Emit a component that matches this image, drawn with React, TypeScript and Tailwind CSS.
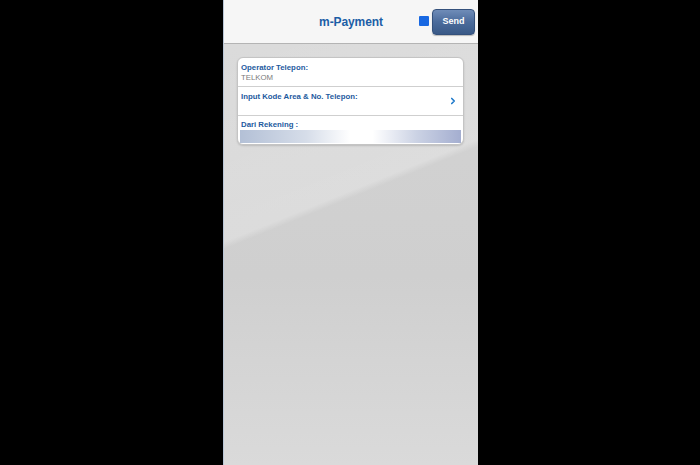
import { ChevronRight } from 'lucide-react';

const rows = [
  { label: 'Operator Telepon:', value: 'TELKOM' },
  { label: 'Input Kode Area & No. Telepon:', arrow: true },
];

export default function App() {
  return (
    <div className="w-[700px] h-[465px] bg-black flex pl-[223px] font-['Liberation_Sans',Arial,sans-serif]">
      <div className="w-[255px] h-full flex flex-col border-l border-[#b9c6d6]">
        {/* header */}
        <div className="h-[44px] shrink-0 bg-[#f6f6f6] border-b border-[#b4b4b4] flex items-center relative">
          <h1 className="flex-1 text-center text-[12px] font-bold text-[#1c5ea6] tracking-[-0.1px]">m-Payment</h1>
          <div className="absolute right-[3px] top-[9px] flex items-start gap-[3px]">
            <span className="mt-[7px] w-[10px] h-[10px] rounded-[1px] bg-[#1868e2]" />
            <button className="w-[43px] h-[26px] rounded-[4px] border border-[#34517c] bg-[linear-gradient(180deg,#6f8cb8_0%,#4b6b9b_50%,#3a5987_100%)] text-white text-[9px] font-bold shadow-[0_1px_1px_rgba(0,0,0,0.25)]">
              Send
            </button>
          </div>
        </div>

        {/* body */}
        <div className="flex-1 bg-[linear-gradient(158deg,rgba(255,255,255,0.18)_0%,rgba(255,255,255,0.26)_37.8%,rgba(255,255,255,0)_39.2%),linear-gradient(180deg,#d3d3d3_0%,#cfcfcf_55%,#dadada_100%)] pt-[13px] pl-[13px] pr-[14px]">
          <div className="bg-white rounded-[6px] border border-[#c4c4c4] shadow-[0_1px_2px_rgba(0,0,0,0.15)] overflow-hidden">
            {rows.map((r, i) => (
              <div key={i} className="h-[29px] border-b border-[#cfcfcf] px-[3px] pt-[5px] relative">
                <p className="text-[7.8px] leading-[9px] font-bold text-[#1d5a9e]">{r.label}</p>
                {r.value && <p className="text-[7.8px] leading-[9px] mt-[1px] text-[#7a7a7a]">{r.value}</p>}
                {r.arrow && (
                  <ChevronRight size={10} strokeWidth={4} className="absolute right-[5px] top-[9px] text-[#1f7acb]" />
                )}
              </div>
            ))}
            <div className="h-[28px] px-[2px] pt-[5px]">
              <p className="px-[1px] text-[7.8px] leading-[8px] font-bold text-[#1d5a9e]">Dari Rekening :</p>
              <div className="mt-[1px] h-[13px] bg-[linear-gradient(90deg,#b3c0d6_0%,#d6dde9_30%,#ffffff_50%,#ffffff_60%,#cbd2e4_80%,#a4aed0_100%)]" />
            </div>
          </div>
        </div>
      </div>
    </div>
  );
}
